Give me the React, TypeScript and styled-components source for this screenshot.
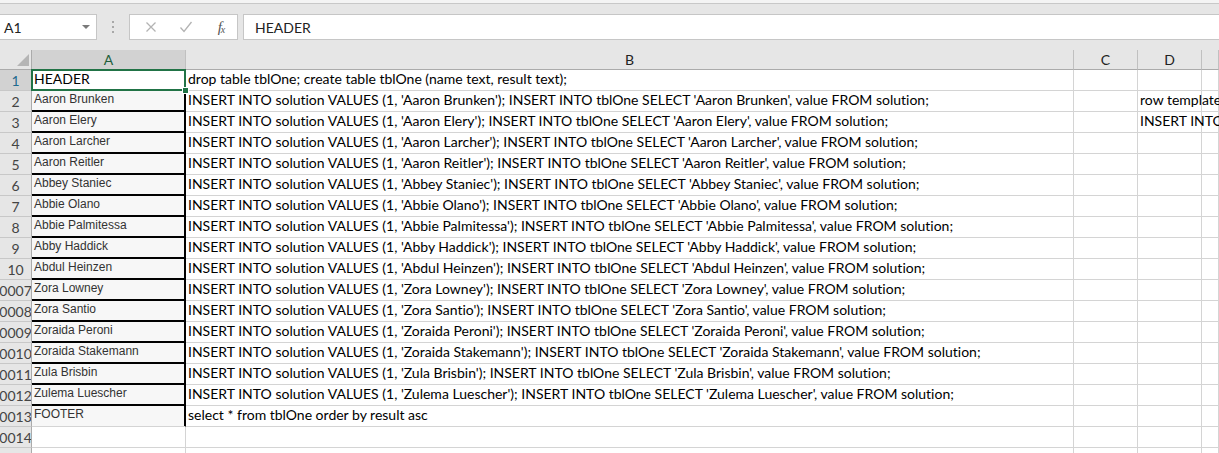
import styled, { createGlobalStyle, css } from "styled-components";

const GlobalStyle = createGlobalStyle`
  html, body {
    margin: 0;
    padding: 0;
    overflow: hidden;
    background: #ffffff;
  }
`;

const SHEET_FONT = `Lato, "Open Sans", sans-serif`;
const DATA_FONT = `"Liberation Sans", Arial, sans-serif`;

type Row = {
	label: string;
	a?: string;
	b?: string;
	d?: string;
	boxed?: boolean;
	lastBoxed?: boolean;
};

const names = [
	"Aaron Brunken",
	"Aaron Elery",
	"Aaron Larcher",
	"Aaron Reitler",
	"Abbey Staniec",
	"Abbie Olano",
	"Abbie Palmitessa",
	"Abby Haddick",
	"Abdul Heinzen",
	"Zora Lowney",
	"Zora Santio",
	"Zoraida Peroni",
	"Zoraida Stakemann",
	"Zula Brisbin",
	"Zulema Luescher",
];

const labels = [
	"2", "3", "4", "5", "6", "7", "8", "9", "10",
	"0007", "0008", "0009", "0010", "0011", "0012",
];

const insertRow = (n: string) =>
	`INSERT INTO solution VALUES (1, '${n}'); INSERT INTO tblOne SELECT '${n}', value FROM solution;`;

const rows: Row[] = [
	{
		label: "1",
		a: "HEADER",
		b: "drop table tblOne; create table tblOne (name text, result text);",
	},
	...names.map((n, i) => ({
		label: labels[i],
		a: n,
		b: insertRow(n),
		d: i === 0 ? "row template" : i === 1 ? "INSERT INTO" : undefined,
		boxed: true,
	})),
	{
		label: "0013",
		a: "FOOTER",
		b: "select * from tblOne order by result asc",
		boxed: true,
		lastBoxed: true,
	},
	{ label: "0014" },
	{ label: "0015" },
];

const Window = styled.div`
  width: 1219px;
  height: 453px;
  overflow: hidden;
  display: flex;
  flex-direction: column;
  background: #ffffff;
  font-variant-ligatures: none;

  & > * {
    flex-shrink: 0;
  }
`;

const RibbonEdge = styled.div`
  height: 3px;
  background: #f4f4f4;
  border-bottom: 1px solid #c8c8c8;
`;

const RibbonBand = styled.div`
  height: 10px;
  background: #e6e6e6;
`;

const FormulaBar = styled.div`
  display: flex;
  height: 36px;
  box-sizing: border-box;
  padding-bottom: 10px;
  background: #e6e6e6;
`;

const NameBox = styled.div`
  width: 97px;
  box-sizing: border-box;
  background: #ffffff;
  border: 1px solid #c6c6c6;
  border-left: none;
  display: flex;
  align-items: center;
  justify-content: space-between;
  padding: 0 6px 0 4px;
  font-family: ${SHEET_FONT};
  font-size: 14px;
  color: #222;
`;

const DropArrow = styled.span`
  width: 0;
  height: 0;
  border-left: 4px solid transparent;
  border-right: 4px solid transparent;
  border-top: 4px solid #7a7a7a;
`;

const Grip = styled.div`
  width: 32px;
  display: flex;
  flex-direction: column;
  align-items: center;
  justify-content: center;
  gap: 3px;
`;

const GripDot = styled.span`
  width: 2px;
  height: 2px;
  background: #a8a8a8;
`;

const ButtonGroup = styled.div`
  width: 109px;
  box-sizing: border-box;
  background: #ffffff;
  border: 1px solid #c6c6c6;
  display: flex;
  align-items: center;
  padding-left: 12px;
  gap: 17px;
`;

const IconSlot = styled.span`
  width: 18px;
  height: 18px;
  display: flex;
  align-items: center;
  justify-content: center;
`;

const Fx = styled.span`
  font-family: "Liberation Serif", "DejaVu Serif", serif;
  font-style: italic;
  font-size: 15px;
  color: #555;
  letter-spacing: -1px;

  sub {
    font-size: 10px;
    vertical-align: -1px;
  }
`;

const FormulaInput = styled.div`
  flex: 1;
  margin-left: 5px;
  box-sizing: border-box;
  background: #ffffff;
  border: 1px solid #c6c6c6;
  border-right: none;
  display: flex;
  align-items: center;
  padding-left: 11px;
  font-family: ${SHEET_FONT};
  font-size: 14px;
  color: #222;
`;

const Sheet = styled.div`
  display: grid;
  grid-template-columns: 32px 154px 888px 64px 64px 1fr;
  grid-template-rows: 20px;
  grid-auto-rows: 21px;
  font-family: ${SHEET_FONT};
`;

const Corner = styled.div`
  position: relative;
  background: #e6e6e6;
  border-right: 1px solid #ababab;
  border-bottom: 1px solid #ababab;
  box-sizing: border-box;

  &::after {
    content: "";
    position: absolute;
    right: 2px;
    bottom: 3px;
    width: 12px;
    height: 12px;
    background: #b5b5b5;
    clip-path: polygon(100% 0, 100% 100%, 0 100%);
  }
`;

const ColHeader = styled.div<{ $active?: boolean }>`
  box-sizing: border-box;
  background: ${(p) => (p.$active ? "#d2d2d2" : "#e6e6e6")};
  border-right: 1px solid #c0c0c0;
  border-bottom: 1px solid #ababab;
  display: flex;
  align-items: center;
  justify-content: center;
  font-size: 14px;
  color: ${(p) => (p.$active ? "#1e5e3b" : "#222")};
`;

const RowHeader = styled.div<{ $active?: boolean }>`
  box-sizing: border-box;
  overflow: hidden;
  background: ${(p) => (p.$active ? "#d2d2d2" : "#e6e6e6")};
  border-right: 1px solid #ababab;
  border-bottom: 1px solid #c8c8c8;
  display: flex;
  align-items: center;
  justify-content: center;
  white-space: nowrap;
  font-size: 14px;
  color: ${(p) => (p.$active ? "#1e6b8f" : "#444")};
`;

const Cell = styled.div`
  position: relative;
  box-sizing: border-box;
  border-right: 1px solid #d4d4d4;
  border-bottom: 1px solid #d4d4d4;
  display: flex;
  align-items: flex-end;
  padding: 0 2px 3px;
  white-space: nowrap;
  font-size: 14px;
  color: #000;
  min-width: 0;
`;

const NameCell = styled(Cell)<{ $boxed?: boolean; $last?: boolean }>`
  align-items: flex-start;
  padding: 1px 2px 0;
  overflow: hidden;
  ${(p) =>
		p.$boxed &&
		css`
      background: #f7f7f7;
      font-family: ${DATA_FONT};
      font-size: 12px;
      color: #333;
      border-right-color: #000;
      box-shadow: inset -1px 0 0 #000;
    `}
  ${(p) =>
		p.$boxed &&
		!p.$last &&
		css`
      border-bottom-color: #000;
      box-shadow: inset -1px 0 0 #000, inset 0 -1px 0 #000;
    `}
  ${(p) =>
		!p.$boxed &&
		css`
      overflow: visible;
      align-items: flex-end;
      padding: 0 2px 3px;
    `}
`;

const OverflowCell = styled(Cell)`
  overflow: visible;
  z-index: 1;
`;

const Selection = styled.div`
  position: absolute;
  inset: -1px;
  border: 2px solid #217346;
  pointer-events: none;
  z-index: 2;
`;

const FillHandle = styled.span`
  position: absolute;
  right: -5px;
  bottom: -5px;
  width: 5px;
  height: 5px;
  background: #217346;
  border: 1px solid #ffffff;
`;

function CancelIcon() {
	return (
		<svg width="12" height="12" viewBox="0 0 12 12">
			<path d="M1.5 1.5 L10.5 10.5 M10.5 1.5 L1.5 10.5" stroke="#b3b3b3" strokeWidth="1.3" fill="none" />
		</svg>
	);
}

function EnterIcon() {
	return (
		<svg width="14" height="12" viewBox="0 0 14 12">
			<path d="M1.5 6.5 L5 10.5 L12.5 1" stroke="#b3b3b3" strokeWidth="1.3" fill="none" />
		</svg>
	);
}

export default function App() {
	return (
		<>
			<GlobalStyle />
			<Window>
				<RibbonEdge />
				<RibbonBand />
				<FormulaBar>
					<NameBox>
						A1
						<DropArrow />
					</NameBox>
					<Grip>
						<GripDot />
						<GripDot />
						<GripDot />
					</Grip>
					<ButtonGroup>
						<IconSlot>
							<CancelIcon />
						</IconSlot>
						<IconSlot>
							<EnterIcon />
						</IconSlot>
						<IconSlot>
							<Fx>
								f<sub>x</sub>
							</Fx>
						</IconSlot>
					</ButtonGroup>
					<FormulaInput>HEADER</FormulaInput>
				</FormulaBar>
				<Sheet>
					<Corner />
					<ColHeader $active>A</ColHeader>
					<ColHeader>B</ColHeader>
					<ColHeader>C</ColHeader>
					<ColHeader>D</ColHeader>
					<ColHeader />
					{rows.map((r, i) => {
						const selected = i === 0;
						return [
							<RowHeader key={`${r.label}-h`} $active={selected}>
								{r.label}
							</RowHeader>,
							<NameCell key={`${r.label}-a`} $boxed={r.boxed} $last={r.lastBoxed}>
								{r.a}
								{selected && (
									<Selection>
										<FillHandle />
									</Selection>
								)}
							</NameCell>,
							<Cell key={`${r.label}-b`}>{r.b}</Cell>,
							<Cell key={`${r.label}-c`} />,
							<OverflowCell key={`${r.label}-d`}>{r.d}</OverflowCell>,
							<Cell key={`${r.label}-e`} />,
						];
					})}
				</Sheet>
			</Window>
		</>
	);
}
